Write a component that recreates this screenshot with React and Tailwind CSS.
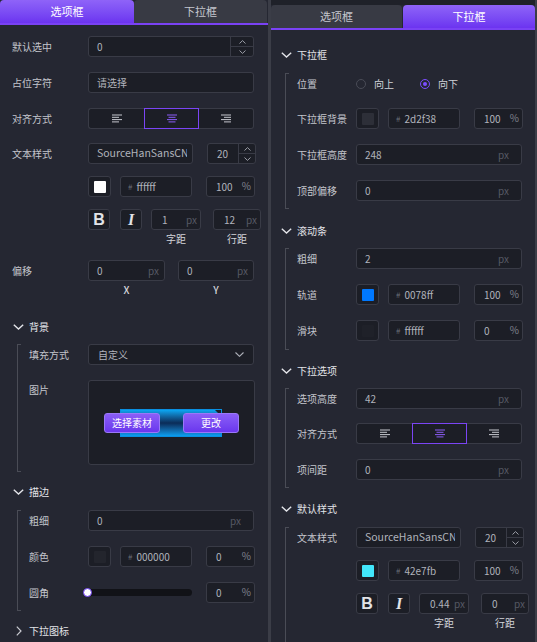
import React from 'react';

const boxCls = 'h-[21px] rounded-[3px] border border-[#393b46] bg-[#1c1e26] flex items-center text-[10px] leading-none text-[#b0b3bb]';

const ChevDown = () => (
  <svg width="11" height="6" viewBox="0 0 11 6" fill="none">
    <path d="M0.8 0.8 L5.5 5 L10.2 0.8" stroke="#e3e4e9" strokeWidth="1.4" />
  </svg>
);

const ChevRight = () => (
  <svg width="6" height="10" viewBox="0 0 6 10" fill="none">
    <path d="M0.8 0.6 L5 5 L0.8 9.4" stroke="#c9cbd1" strokeWidth="1.2" />
  </svg>
);

const SmallArrow = ({ up }) => (
  <svg width="7" height="4" viewBox="0 0 7 4" fill="none">
    <path d={up ? 'M0.5 3.5 L3.5 0.6 L6.5 3.5' : 'M0.5 0.5 L3.5 3.4 L6.5 0.5'} stroke="#9a9da6" strokeWidth="1" />
  </svg>
);

function AlignIcon({ type, active }) {
  const c = active ? '#8b5cf6' : '#c6c8cf';
  const lines =
    type === 'left'
      ? [[0, 10], [0, 7], [0, 10], [0, 7]]
      : type === 'center'
      ? [[0, 10], [1.5, 8.5], [0, 10], [1.5, 8.5]]
      : [[0, 10], [3, 10], [0, 10], [3, 10]];
  return (
    <svg width="10" height="9" viewBox="0 0 10 9">
      {lines.map(([a, b], i) => (
        <line key={i} x1={a} x2={b} y1={1 + i * 2.3} y2={1 + i * 2.3} stroke={c} strokeWidth="1" />
      ))}
    </svg>
  );
}

function Label({ w, children }) {
  return <div className={`${w} shrink-0 text-[10px] leading-none text-[#c3c5cc]`}>{children}</div>;
}

function Row({ label, w, className = '', children }) {
  return (
    <div className={`flex h-[21px] items-center ${className}`}>
      <Label w={w}>{label}</Label>
      {children}
    </div>
  );
}

function UnitInput({ value, unit = 'px', className }) {
  return (
    <div className={`${boxCls} justify-between ${className}`}>
      <span>{value}</span>
      <span className={unit === '%' ? 'text-[#80838d] -translate-y-[1px]' : 'text-[#565964]'}>{unit}</span>
    </div>
  );
}

function Spin({ value, className, arrowW, padL }) {
  return (
    <div className={`flex h-[21px] rounded-[3px] border border-[#393b46] bg-[#1c1e26] ${className}`}>
      <div className={`flex flex-1 items-center text-[10px] leading-none text-[#b0b3bb] ${padL}`}>{value}</div>
      <div className={`${arrowW} flex flex-col border-l border-[#393b46]`}>
        <div className="flex flex-1 items-center justify-center border-b border-[#393b46]">
          <SmallArrow up />
        </div>
        <div className="flex flex-1 items-center justify-center">
          <SmallArrow />
        </div>
      </div>
    </div>
  );
}

function Swatch({ color }) {
  return (
    <div className={`${boxCls} w-[23px] justify-center`}>
      <div className="h-[12px] w-[12px] rounded-[1px]" style={{ background: color }} />
    </div>
  );
}

function ColorRow({ color, hex, pct }) {
  return (
    <div className="flex items-center">
      <Swatch color={color} />
      <div className={`${boxCls} ml-[9px] w-[72px] pl-[7px]`}>
        <span className="mr-[4px] text-[8px] text-[#686b75]">#</span>
        <span>{hex}</span>
      </div>
      <UnitInput value={pct} unit="%" className="ml-[14px] w-[49px] pl-[9px] pr-[3px]" />
    </div>
  );
}

function AlignSeg() {
  return (
    <div className="flex h-[21px] w-[166px]">
      <div className="flex w-[56px] items-center justify-center rounded-l-[3px] border border-r-0 border-[#393b46] bg-[#1c1e26]">
        <AlignIcon type="left" />
      </div>
      <div className="flex w-[55px] items-center justify-center border border-[#7b45f5] bg-[#1c1e26]">
        <AlignIcon type="center" active />
      </div>
      <div className="flex w-[55px] items-center justify-center rounded-r-[3px] border border-l-0 border-[#393b46] bg-[#1c1e26]">
        <AlignIcon type="right" />
      </div>
    </div>
  );
}

function TextStyle({ w, color, hex, spacing, lineH }) {
  return (
    <>
      <Row label="文本样式" w={w}>
        <div className={`${boxCls} w-[105px] pl-[8px]`}>
          <span className="block w-[90px] overflow-hidden whitespace-nowrap text-[10.5px]">SourceHanSansCN-M</span>
        </div>
        <Spin value="20" className="ml-[14px] w-[49px]" arrowW="w-[17px]" padL="pl-[9px]" />
      </Row>
      <div className="mt-[12px] flex">
        <div className={`${w} shrink-0`} />
        <ColorRow color={color} hex={hex} pct="100" />
      </div>
      <div className="mt-[12px] flex h-[21px]">
        <div className={`${w} shrink-0`} />
        <div className={`${boxCls} w-[22px] justify-center font-['Liberation_Sans',sans-serif] text-[16px] font-bold text-[#e2e3e6]`}>B</div>
        <div className={`${boxCls} ml-[10px] w-[22px] justify-center font-['Liberation_Serif',serif] text-[16px] font-bold italic text-[#e2e3e6]`}>I</div>
        <UnitInput value={spacing} className="ml-[9px] w-[50px] pl-[10px] pr-[3px]" />
        <UnitInput value={lineH} className="ml-[12px] w-[48px] pl-[10px] pr-[3px]" />
      </div>
      <div className="mt-[2px] flex h-[14px] items-center text-[10px] leading-none text-[#d3d5da]">
        <div className={`${w} shrink-0`} />
        <div className="ml-[63px] w-[50px] text-center">字距</div>
        <div className="ml-[12px] w-[48px] text-center">行距</div>
      </div>
    </>
  );
}

function Header({ title, open = true, className = '' }) {
  return (
    <div className={`flex h-[20px] items-center ${className}`}>
      <div className={`flex w-[17px] items-center ${open ? 'pl-[1px]' : 'pl-[4px]'}`}>{open ? <ChevDown /> : <ChevRight />}</div>
      <span className="text-[10px] leading-none text-[#e3e4e9]">{title}</span>
    </div>
  );
}

function Group({ className = '', pad = 'pb-[8px]', children }) {
  return (
    <div className={`ml-[5px] flex ${className}`}>
      <div className="w-[4px] shrink-0 border-y border-l border-[#4a4c56]" />
      <div className={`flex-1 pl-[8px] ${pad}`}>{children}</div>
    </div>
  );
}

function Tabs({ active }) {
  const on = 'flex items-center justify-center rounded-t-[4px] bg-gradient-to-b from-[#8f63f8] to-[#6c33f0] text-[11px] text-white';
  const off = 'flex items-center justify-center rounded-t-[4px] bg-[#383a44] text-[11px] text-[#c5c7ce]';
  return (
    <div className="border-b-2 border-[#7a42f4]">
      <div className="flex h-[23px]">
        <div className={`${active === 0 ? on : off} ${active === 1 ? 'w-[131px]' : 'w-[134px]'}`}>选项框</div>
        <div className={`${active === 1 ? on : off} ${active === 1 ? 'ml-px flex-1' : 'w-[133px]'}`}>下拉框</div>
      </div>
    </div>
  );
}

function Radio({ checked, label }) {
  return (
    <div className="flex items-center">
      <div className={`flex h-[10px] w-[10px] items-center justify-center rounded-full border ${checked ? 'border-[#7c4dff]' : 'border-[#4a4c57]'}`}>
        {checked && <div className="h-[4px] w-[4px] rounded-full bg-[#7c4dff]" />}
      </div>
      <span className="ml-[8px] text-[10px] leading-none text-[#d0d2d8]">{label}</span>
    </div>
  );
}

function LeftPanel() {
  const G = 'w-[59px]';
  return (
    <div className="w-[268px] shrink-0">
      <Tabs active={0} />
      <div className="pl-[12px] pt-[11px]">
        <Row label="默认选中" w="w-[76px]">
          <Spin value="0" className="w-[166px]" arrowW="w-[23px]" padL="pl-[8px]" />
        </Row>
        <Row label="占位字符" w="w-[76px]" className="mt-[15px]">
          <div className={`${boxCls} w-[166px] pl-[8px]`}>请选择</div>
        </Row>
        <Row label="对齐方式" w="w-[76px]" className="mt-[15px]">
          <AlignSeg />
        </Row>
        <div className="mt-[14px]">
          <TextStyle w="w-[76px]" color="#ffffff" hex="ffffff" spacing="1" lineH="12" />
        </div>
        <Row label="偏移" w="w-[76px]" className="mt-[14px]">
          <UnitInput value="0" className="w-[77px] pl-[8px] pr-[5px]" />
          <UnitInput value="0" className="ml-[13px] w-[76px] pl-[8px] pr-[5px]" />
        </Row>
        <div className="mt-[2px] flex h-[14px] items-center text-[10px] font-medium leading-none text-[#d3d5da]">
          <div className="w-[76px] shrink-0" />
          <div className="w-[77px] text-center">X</div>
          <div className="ml-[13px] w-[76px] text-center">Y</div>
        </div>

        <Header title="背景" className="mt-[20px]" />
        <Group className="mt-[7px]" pad="pb-[7px]">
          <Row label="填充方式" w={G}>
            <div className={`${boxCls} w-[166px] justify-between pl-[9px] pr-[9px] text-[#9c9fa8]`}>
              <span>自定义</span>
              <svg width="9" height="5" viewBox="0 0 9 5" fill="none">
                <path d="M0.5 0.5 L4.5 4.3 L8.5 0.5" stroke="#aeb1ba" strokeWidth="1.1" />
              </svg>
            </div>
          </Row>
          <div className="mt-[15px] flex items-start">
            <div className="pt-[5px]">
              <Label w={G}>图片</Label>
            </div>
            <div className="flex h-[85px] w-[167px] items-center justify-center rounded-[3px] border border-[#393b46] bg-[#1c1e26]">
              <div className="relative flex h-[28px] w-[135px] items-center justify-between">
                <div className="absolute inset-y-0 left-[16px] right-[17px] border border-[#0a8fe0] bg-gradient-to-b from-[#0aa6f2] via-[#0b2c58] to-[#0a9ef0]">
                  <div className="absolute right-0 top-0 h-0 w-0 border-l-[6px] border-t-[6px] border-l-transparent border-t-[#1c1e26]" />
                </div>
                <div className="relative flex h-[20px] w-[56px] items-center justify-center rounded-[3px] border border-[#9a78f8] bg-gradient-to-b from-[#8b5df7] to-[#6b36ee] text-[10px] text-white">选择素材</div>
                <div className="relative flex h-[20px] w-[56px] items-center justify-center rounded-[3px] border border-[#9a78f8] bg-gradient-to-b from-[#8b5df7] to-[#6b36ee] text-[10px] text-white">更改</div>
              </div>
            </div>
          </div>
        </Group>

        <Header title="描边" className="mt-[10px]" />
        <Group className="mt-[8px]">
          <Row label="粗细" w={G}>
            <UnitInput value="0" className="w-[166px] pl-[8px] pr-[12px]" />
          </Row>
          <Row label="颜色" w={G} className="mt-[15px]">
            <ColorRow color="#23252d" hex="000000" pct="0" />
          </Row>
          <Row label="圆角" w={G} className="mt-[15px]">
            <div className="relative -ml-[5px] flex h-[9px] w-[109px] items-center">
              <div className="ml-[2px] h-[7px] flex-1 rounded-full bg-[#111217]" />
              <div className="absolute left-0 top-0 h-[9px] w-[9px] rounded-full border-[1.5px] border-[#6d3cf0] bg-white" />
            </div>
            <UnitInput value="0" unit="%" className="ml-[14px] w-[49px] pl-[9px] pr-[3px]" />
          </Row>
        </Group>

        <Header title="下拉图标" open={false} className="mt-[10px]" />
      </div>
    </div>
  );
}

function RightPanel() {
  const G = 'w-[59px]';
  return (
    <div className="w-[264px] shrink-0">
      <div className="h-[5px] bg-[#1f2129]" />
      <Tabs active={1} />
      <div className="pl-[9px]">
        <Header title="下拉框" className="mt-[15px]" />
        <Group className="mt-[8px]">
          <Row label="位置" w={G}>
            <div className="w-[64px]">
              <Radio label="向上" />
            </div>
            <Radio checked label="向下" />
          </Row>
          <Row label="下拉框背景" w={G} className="mt-[14px]">
            <ColorRow color="#2d2f38" hex="2d2f38" pct="100" />
          </Row>
          <Row label="下拉框高度" w={G} className="mt-[15px]">
            <UnitInput value="248" className="w-[166px] pl-[8px] pr-[12px]" />
          </Row>
          <Row label="顶部偏移" w={G} className="mt-[15px]">
            <UnitInput value="0" className="w-[166px] pl-[8px] pr-[12px]" />
          </Row>
        </Group>

        <Header title="滚动条" className="mt-[12px]" />
        <Group className="mt-[7px]" pad="pb-[9px]">
          <Row label="粗细" w={G}>
            <UnitInput value="2" className="w-[166px] pl-[8px] pr-[12px]" />
          </Row>
          <Row label="轨道" w={G} className="mt-[15px]">
            <ColorRow color="#0078ff" hex="0078ff" pct="100" />
          </Row>
          <Row label="滑块" w={G} className="mt-[15px]">
            <ColorRow color="#1f2129" hex="ffffff" pct="0" />
          </Row>
        </Group>

        <Header title="下拉选项" className="mt-[11px]" />
        <Group className="mt-[7px]">
          <Row label="选项高度" w={G}>
            <UnitInput value="42" className="w-[166px] pl-[8px] pr-[12px]" />
          </Row>
          <Row label="对齐方式" w={G} className="mt-[14px]">
            <AlignSeg />
          </Row>
          <Row label="项间距" w={G} className="mt-[15px]">
            <UnitInput value="0" className="w-[166px] pl-[8px] pr-[12px]" />
          </Row>
        </Group>

        <Header title="默认样式" className="mt-[11px]" />
        <Group className="mt-[8px]" pad="pb-[60px]">
          <TextStyle w={G} color="#42e7fb" hex="42e7fb" spacing="0.44" lineH="0" />
        </Group>
      </div>
    </div>
  );
}

export default function App() {
  return (
    <div className="flex h-[642px] w-[537px] overflow-hidden bg-[#252732] font-['Noto_Sans_CJK_SC','Noto_Sans',sans-serif]">
      <LeftPanel />
      <div className="w-[3px] shrink-0 bg-[#3b3d47]" />
      <RightPanel />
      <div className="w-[2px] shrink-0 bg-[#3b3d47]" />
    </div>
  );
}
